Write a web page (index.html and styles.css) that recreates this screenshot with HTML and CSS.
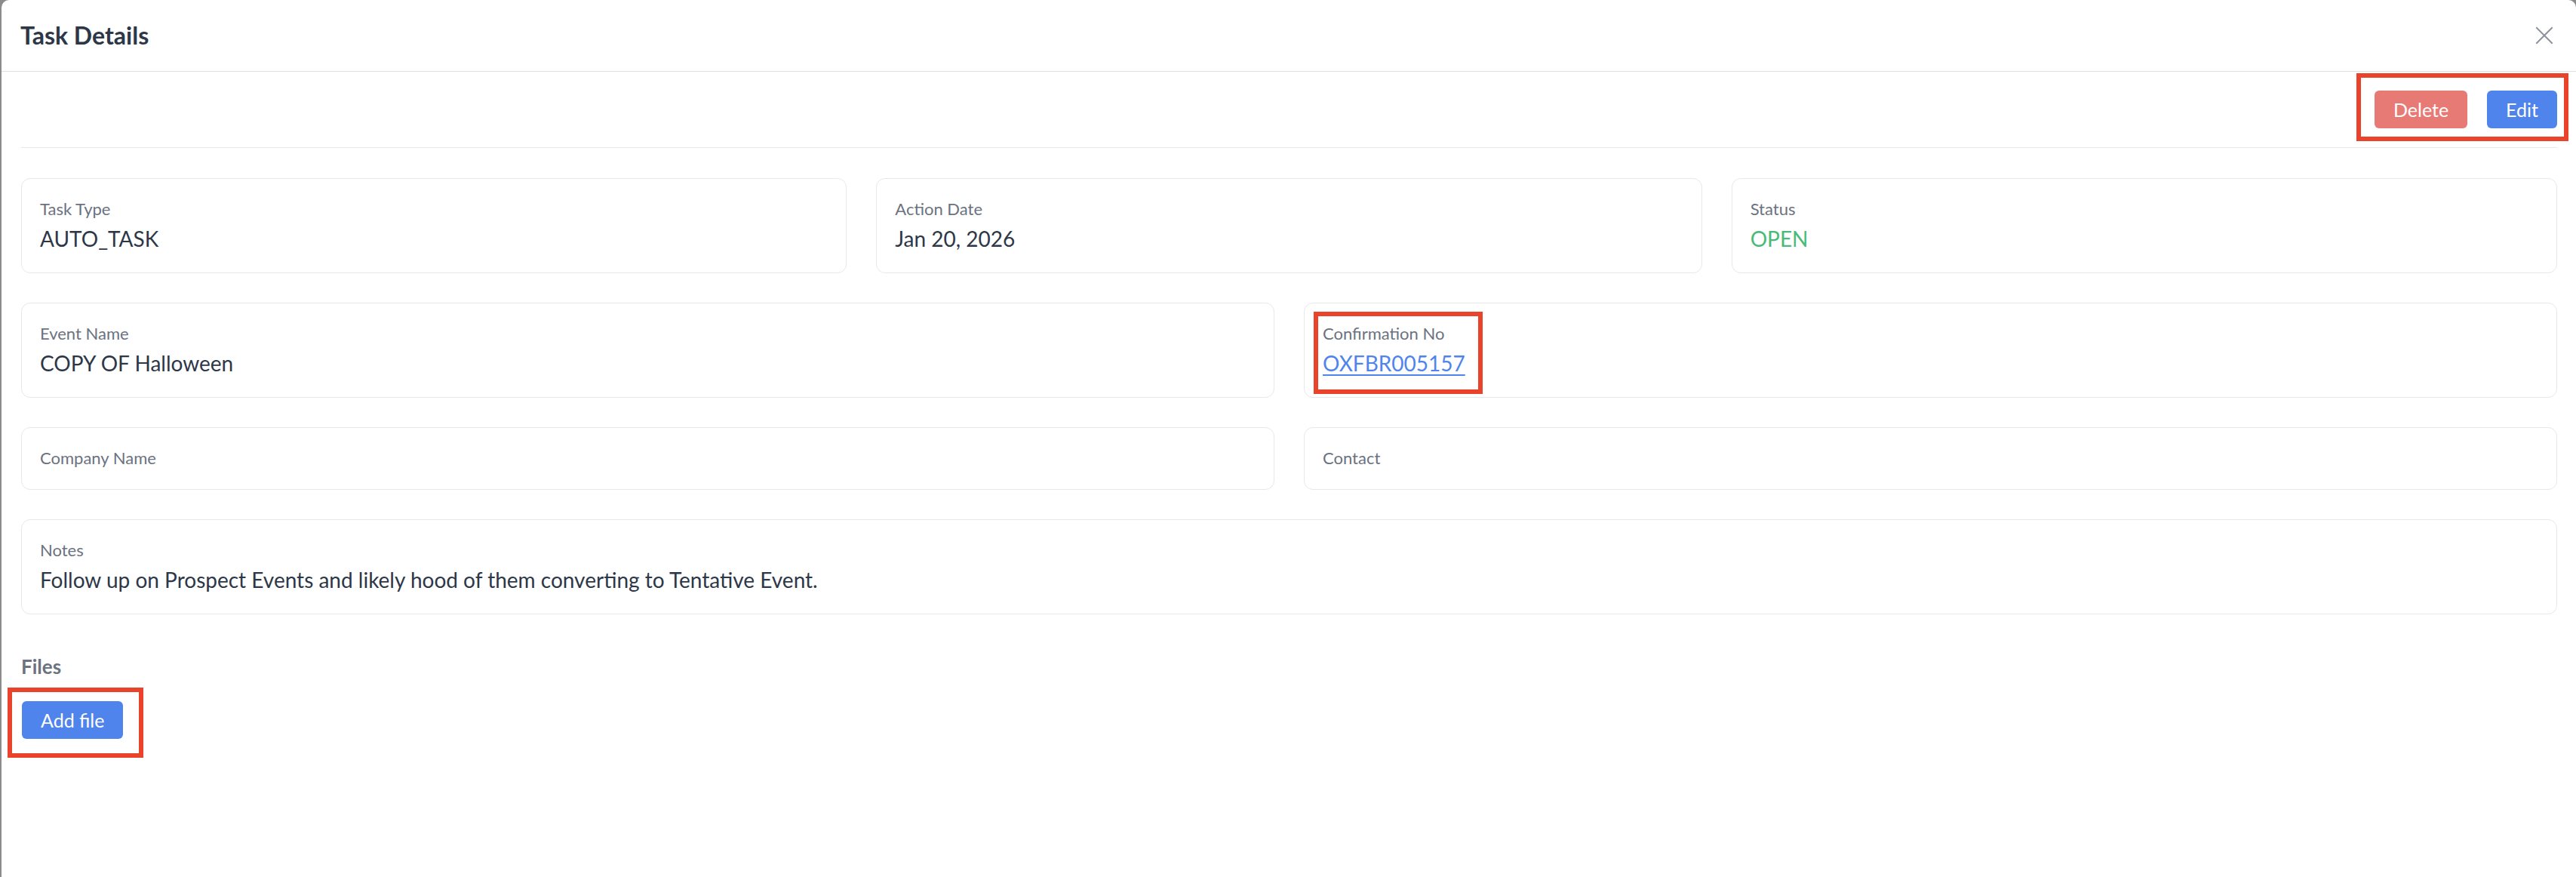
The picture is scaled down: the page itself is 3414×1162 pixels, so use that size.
FILE: index.html
```html
<!DOCTYPE html>

<html>

<head>

    <title>Task Details</title>

    <meta charset="utf-8">

    <link rel="stylesheet" href="styles.css">

</head>

<body>

    <div class="modal">

        <div class="modal-header">
            <h2 class="modal-title">Task Details</h2>
            <button class="close-btn" type="button" title="Close">
                <svg width="24" height="24" viewBox="0 0 24 24" fill="none" stroke="currentColor" stroke-width="2" stroke-linecap="square">
                    <path d="M2 2 L22 22 M22 2 L2 22"/>
                </svg>
            </button>
        </div>

        <div class="modal-body">

            <div class="actions">
                <div class="btn-group marked mark-actions">
                    <button class="btn danger" type="button">Delete</button>
                    <button class="btn primary" type="button">Edit</button>
                </div>
            </div>

            <div class="fields">

                <div class="row cols-3">
                    <div class="card">
                        <div class="label">Task Type</div>
                        <div class="value">AUTO_TASK</div>
                    </div>
                    <div class="card">
                        <div class="label">Action Date</div>
                        <div class="value">Jan 20, 2026</div>
                    </div>
                    <div class="card">
                        <div class="label">Status</div>
                        <div class="value status-open">OPEN</div>
                    </div>
                </div>

                <div class="row cols-2">
                    <div class="card">
                        <div class="label">Event Name</div>
                        <div class="value">COPY OF Halloween</div>
                    </div>
                    <div class="card">
                        <div class="field-inline marked mark-confirm">
                            <div class="label">Confirmation No</div>
                            <div class="value"><a href="#" class="link">OXFBR005157</a></div>
                        </div>
                    </div>
                </div>

                <div class="row cols-2">
                    <div class="card">
                        <div class="label">Company Name</div>
                    </div>
                    <div class="card">
                        <div class="label">Contact</div>
                    </div>
                </div>

                <div class="row">
                    <div class="card">
                        <div class="label">Notes</div>
                        <div class="value">Follow up on Prospect Events and likely hood of them converting to Tentative Event.</div>
                    </div>
                </div>

            </div>

            <div class="files">
                <div class="files-title">Files</div>
                <div class="marked mark-file">
                    <button class="btn primary" type="button">Add file</button>
                </div>
            </div>

        </div>

    </div>

</body>

</html>
```

FILE: styles.css
```css
* {
    margin: 0;
    padding: 0;
    box-sizing: border-box;
}

html,
body {
    height: 100%;
}

body {
    background: #8b8b8b;
    font-family: Lato, "Open Sans", sans-serif;
    color: #2d3748;
    overflow: hidden;
    padding-left: 2px;
}

a {
    color: inherit;
}

button {
    font-family: inherit;
    border: 0;
    background: none;
    cursor: pointer;
}



.modal {
    background: #fff;
    border-radius: 10px 10px 0 0;
    min-height: 100%;
}

.modal-header {
    display: flex;
    align-items: center;
    justify-content: space-between;
    height: 95px;
    padding: 0 30px 0 25px;
    border-bottom: 1px solid #dcdfe5;
}

.modal-title {
    font-size: 32px;
    font-weight: 700;
    color: #2d3748;
    margin-top: -2px;
}

.close-btn {
    display: flex;
    color: #8e939b;
}

.modal-body {
    padding: 0 25px 0 26px;
}



.actions {
    display: flex;
    align-items: center;
    justify-content: flex-end;
    height: 101px;
    border-bottom: 1px solid #e6e8ec;
}

.btn-group {
    display: flex;
    gap: 26px;
}

.btn {
    height: 50px;
    padding: 0 25px;
    border-radius: 6px;
    font-size: 25px;
    color: #fff;
}

.btn.primary {
    background: #4f84ed;
}

.btn.danger {
    background: #e87a75;
}



.fields {
    display: flex;
    flex-direction: column;
    gap: 39px;
    padding-top: 40px;
}

.row {
    display: grid;
    gap: 39px;
}

.row.cols-3 {
    grid-template-columns: repeat(3, 1fr);
}

.row.cols-2 {
    grid-template-columns: repeat(2, 1fr);
}

.card {
    border: 1px solid #e6e8ec;
    border-radius: 12px;
    padding: 27px 24px 28px;
}

.label {
    font-size: 22px;
    line-height: 26px;
    color: #6b7280;
}

.value {
    font-size: 28px;
    line-height: 34px;
    margin-top: 9px;
    color: #2d3748;
}

.status-open {
    color: #48bb78;
}

.link {
    color: #4f84ed;
    text-decoration: underline;
    text-underline-offset: 4px;
    text-decoration-thickness: 2px;
}

.field-inline {
    display: inline-block;
}



.files {
    padding-top: 54px;
}

.files-title {
    font-size: 26px;
    line-height: 31px;
    font-weight: 700;
    color: #6b7280;
    margin-bottom: 30px;
}



/* red call-out frames */
.marked {
    position: relative;
    display: inline-block;
}

.marked::after {
    content: "";
    position: absolute;
    border: 6px solid #e9432b;
    pointer-events: none;
}

.mark-actions::after {
    top: -23px;
    bottom: -17px;
    left: -24px;
    right: -15px;
}

.mark-confirm::after {
    top: -16px;
    bottom: -24px;
    left: -12px;
    right: -23px;
}

.mark-file::after {
    top: -18px;
    bottom: -25px;
    left: -19px;
    right: -27px;
}

.mark-actions {
    display: flex;
}

.mark-file {
    margin-left: 1px;
}
```
